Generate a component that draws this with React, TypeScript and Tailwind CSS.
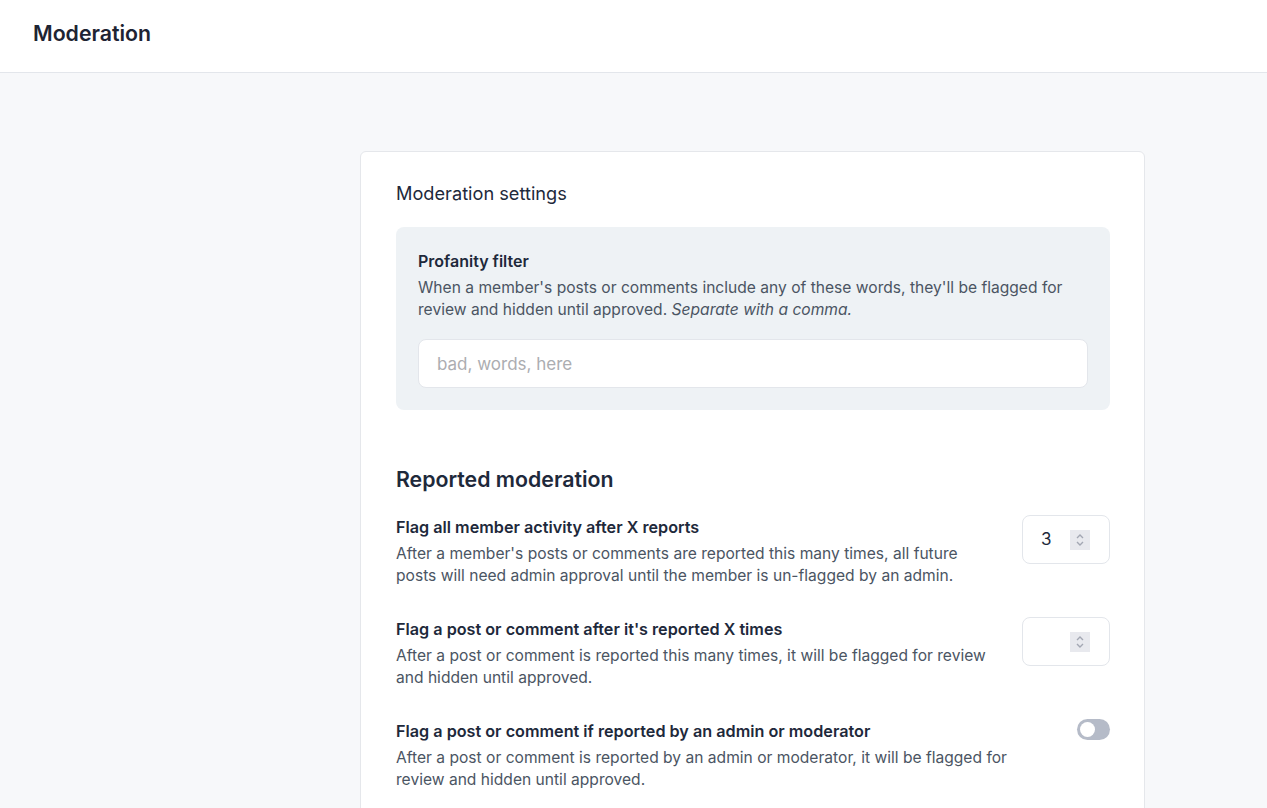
import React from "react";

function Spinner() {
  return (
    <div className="flex h-[20px] w-[20px] items-center justify-center bg-[#e8e9ee]">
      <svg width="10" height="14" viewBox="0 0 10 14" fill="none" stroke="#a3a7b3" strokeWidth="1.4">
        <path d="M2 5 L5 2 L8 5" />
        <path d="M2 9 L5 12 L8 9" />
      </svg>
    </div>
  );
}

function NumberBox({ value }: { value?: string }) {
  return (
    <div className="-mt-[1px] flex h-[49px] w-[88px] shrink-0 items-center justify-between rounded-lg border border-[#e3e6eb] bg-white pl-[18px] pr-[19px]">
      <span className="text-[17px] text-[#1e293b]">{value ?? ""}</span>
      <Spinner />
    </div>
  );
}

function Toggle() {
  return (
    <div className="mt-[-1px] flex h-[21px] w-[33px] shrink-0 items-center rounded-full bg-[#b5bbc8] px-[3px]">
      <div className="h-[15px] w-[15px] rounded-full bg-white" />
    </div>
  );
}

type Row = { title: string; desc: string; control: React.ReactNode };

const rows: Row[] = [
  {
    title: "Flag all member activity after X reports",
    desc: "After a member's posts or comments are reported this many times, all future posts will need admin approval until the member is un-flagged by an admin.",
    control: <NumberBox value="3" />,
  },
  {
    title: "Flag a post or comment after it's reported X times",
    desc: "After a post or comment is reported this many times, it will be flagged for review and hidden until approved.",
    control: <NumberBox />,
  },
  {
    title: "Flag a post or comment if reported by an admin or moderator",
    desc: "After a post or comment is reported by an admin or moderator, it will be flagged for review and hidden until approved.",
    control: <Toggle />,
  },
];

export default function App() {
  return (
    <div className="min-h-screen bg-[#f7f8fa] font-['Inter','Liberation_Sans',sans-serif]">
      {/* Header */}
      <header className="flex h-[73px] items-center border-b border-[#e3e6eb] bg-white px-[33px] pb-[5px]">
        <h1 className="text-[21.3px] font-semibold text-[#1e2433]">Moderation</h1>
      </header>

      <main className="pl-[360px] pt-[78px]">
        <div className="w-[785px] rounded-t-md border border-[#e5e7eb] bg-white px-[35px] pt-[27px] pb-10">
          <h2 className="text-[18.2px] leading-[28px] text-[#1e293b]">Moderation settings</h2>

          {/* Profanity filter */}
          <div className="mt-[20px] w-[714px] rounded-lg bg-[#eef2f5] px-[22px] pt-[23px] pb-[22px]">
            <h3 className="text-[16px] font-semibold leading-[22px] text-[#1e293b]">Profanity filter</h3>
            <p className="mt-[5px] text-[15.6px] leading-[22px] text-[#4b5563]">
              When a member's posts or comments include any of these words, they'll be flagged for review and hidden
              until approved. <em>Separate with a comma.</em>
            </p>
            <input
              type="text"
              placeholder="bad, words, here"
              className="mt-[18px] h-[49px] w-full rounded-lg border border-[#e3e6eb] bg-white px-[18px] text-[17px] text-[#1e293b] outline-none placeholder:text-[#acadb1]"
            />
          </div>

          {/* Reported moderation */}
          <h2 className="mt-[55px] text-[21.3px] font-semibold leading-[28px] text-[#1e293b]">Reported moderation</h2>

          <div className="mt-[23px] flex w-[714px] flex-col gap-[31px]">
            {rows.map((row) => (
              <div key={row.title} className="flex items-start gap-[28px]">
                <div className="min-w-0 flex-1">
                  <h4 className="text-[16.2px] font-semibold leading-[22px] text-[#1e293b]">{row.title}</h4>
                  <p className="mt-[5px] text-[15.6px] leading-[22px] text-[#4b5563]">{row.desc}</p>
                </div>
                {row.control}
              </div>
            ))}
          </div>
        </div>
      </main>
    </div>
  );
}
